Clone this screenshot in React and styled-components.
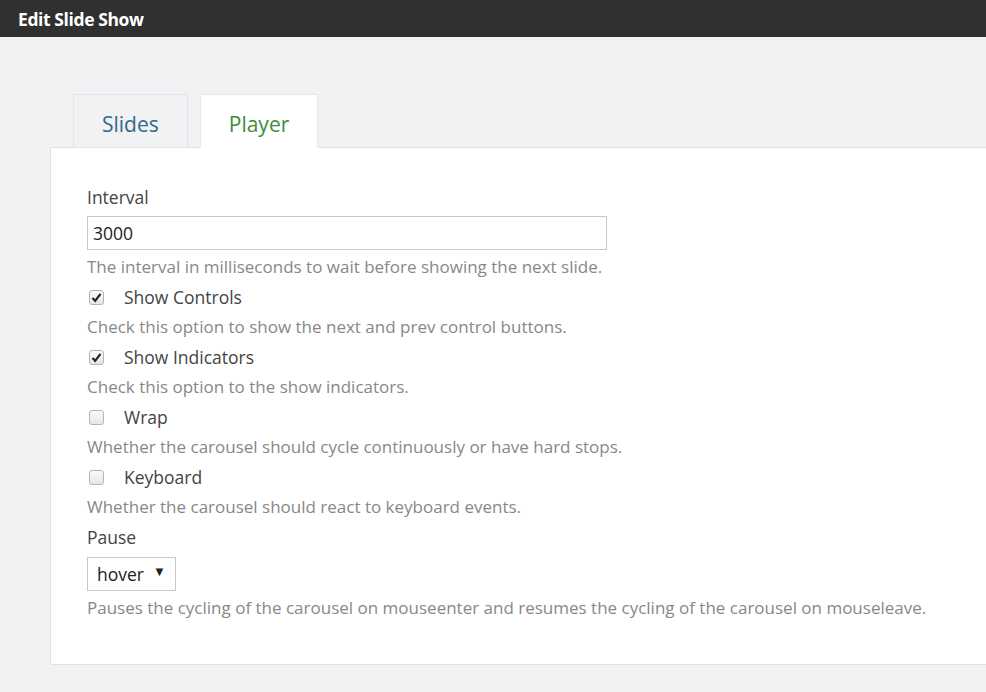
import styled, { createGlobalStyle } from "styled-components";

const Global = createGlobalStyle`
  html, body {
    margin: 0;
    padding: 0;
    background-color: #f1f2f4;
    font-family: "Open Sans", "Noto Sans", sans-serif;
    overflow: hidden;
  }
`;

const TitleBar = styled.div`
  height: 37px;
  background-color: #303030;
  color: #fff;
  display: flex;
  align-items: center;
  padding-left: 18px;
  font-size: 17.5px;
  font-weight: 700;
  letter-spacing: -0.4px;
`;

const Body = styled.div`
  padding: 57px 0 0 50px;
`;

const Tabs = styled.div`
  display: flex;
  gap: 12px;
  padding-left: 23px;
  margin-bottom: -1px;
`;

const Tab = styled.div`
  box-sizing: border-box;
  height: 54px;
  padding: 5px 28px 0 28px;
  display: flex;
  align-items: center;
  font-size: 21px;
  border: 1px solid ${(p) => (p.active ? "#e6e7ea" : "#e3e5e8")};
  border-bottom-color: ${(p) => (p.active ? "#fff" : "#e3e5e8")};
  background-color: ${(p) => (p.active ? "#fff" : "#f1f2f4")};
  color: ${(p) => (p.active ? "#3f8c3f" : "#33698a")};
  position: relative;
  z-index: 1;
`;

const Panel = styled.div`
  background-color: #fff;
  border: 1px solid #e0e1e4;
  margin-right: -20px;
  padding: 34px 36px 41px;
  display: flex;
  flex-direction: column;
`;

const Label = styled.div`
  font-size: 17.5px;
  line-height: 30px;
  color: #444;
`;

const TextInput = styled.div`
  width: 513px;
  height: 32px;
  border: 1px solid #c8c8c8;
  padding-left: 5px;
  display: flex;
  align-items: center;
  font-size: 17.5px;
  color: #222;
  margin: 4px 0 2px;
`;

const Help = styled.div`
  font-size: 17px;
  line-height: 30px;
  color: #888;
  white-space: nowrap;
`;

const CheckRow = styled.div`
  display: flex;
  align-items: center;
  height: 30px;
  font-size: 17.5px;
  color: #444;
`;

const Box = styled.span`
  width: 13px;
  height: 13px;
  border: 1px solid #b4b4b4;
  border-radius: 3px;
  background: linear-gradient(#fafafa, #e6e6e6);
  margin: 0 20px 0 2px;
  display: flex;
  align-items: center;
  justify-content: center;
`;

const Select = styled.div`
  width: 78px;
  height: 32px;
  border: 1px solid #c8c8c8;
  padding-left: 9px;
  display: flex;
  align-items: center;
  gap: 9px;
  font-size: 17.5px;
  color: #222;
  margin: 5px 0 2px;
  span {
    font-size: 13px;
    margin-top: -6px;
  }
`;

const Check = ({ checked, children }) => (
  <CheckRow>
    <Box>
      {checked && (
        <svg width="11" height="11" viewBox="0 0 11 11">
          <path d="M1.5 6 L4.2 8.8 L9.5 1.8" fill="none" stroke="#222" strokeWidth="2.2" />
        </svg>
      )}
    </Box>
    {children}
  </CheckRow>
);

export default function App() {
  return (
    <>
      <Global />
      <TitleBar>Edit Slide Show</TitleBar>
      <Body>
        <Tabs>
          <Tab>Slides</Tab>
          <Tab active>Player</Tab>
        </Tabs>
        <Panel>
          <Label>Interval</Label>
          <TextInput>3000</TextInput>
          <Help>The interval in milliseconds to wait before showing the next slide.</Help>
          <Check checked>Show Controls</Check>
          <Help>Check this option to show the next and prev control buttons.</Help>
          <Check checked>Show Indicators</Check>
          <Help>Check this option to the show indicators.</Help>
          <Check>Wrap</Check>
          <Help>Whether the carousel should cycle continuously or have hard stops.</Help>
          <Check>Keyboard</Check>
          <Help>Whether the carousel should react to keyboard events.</Help>
          <Label>Pause</Label>
          <Select>
            hover <span>▼</span>
          </Select>
          <Help>
            Pauses the cycling of the carousel on mouseenter and resumes the cycling of the carousel on mouseleave.
          </Help>
        </Panel>
      </Body>
    </>
  );
}
